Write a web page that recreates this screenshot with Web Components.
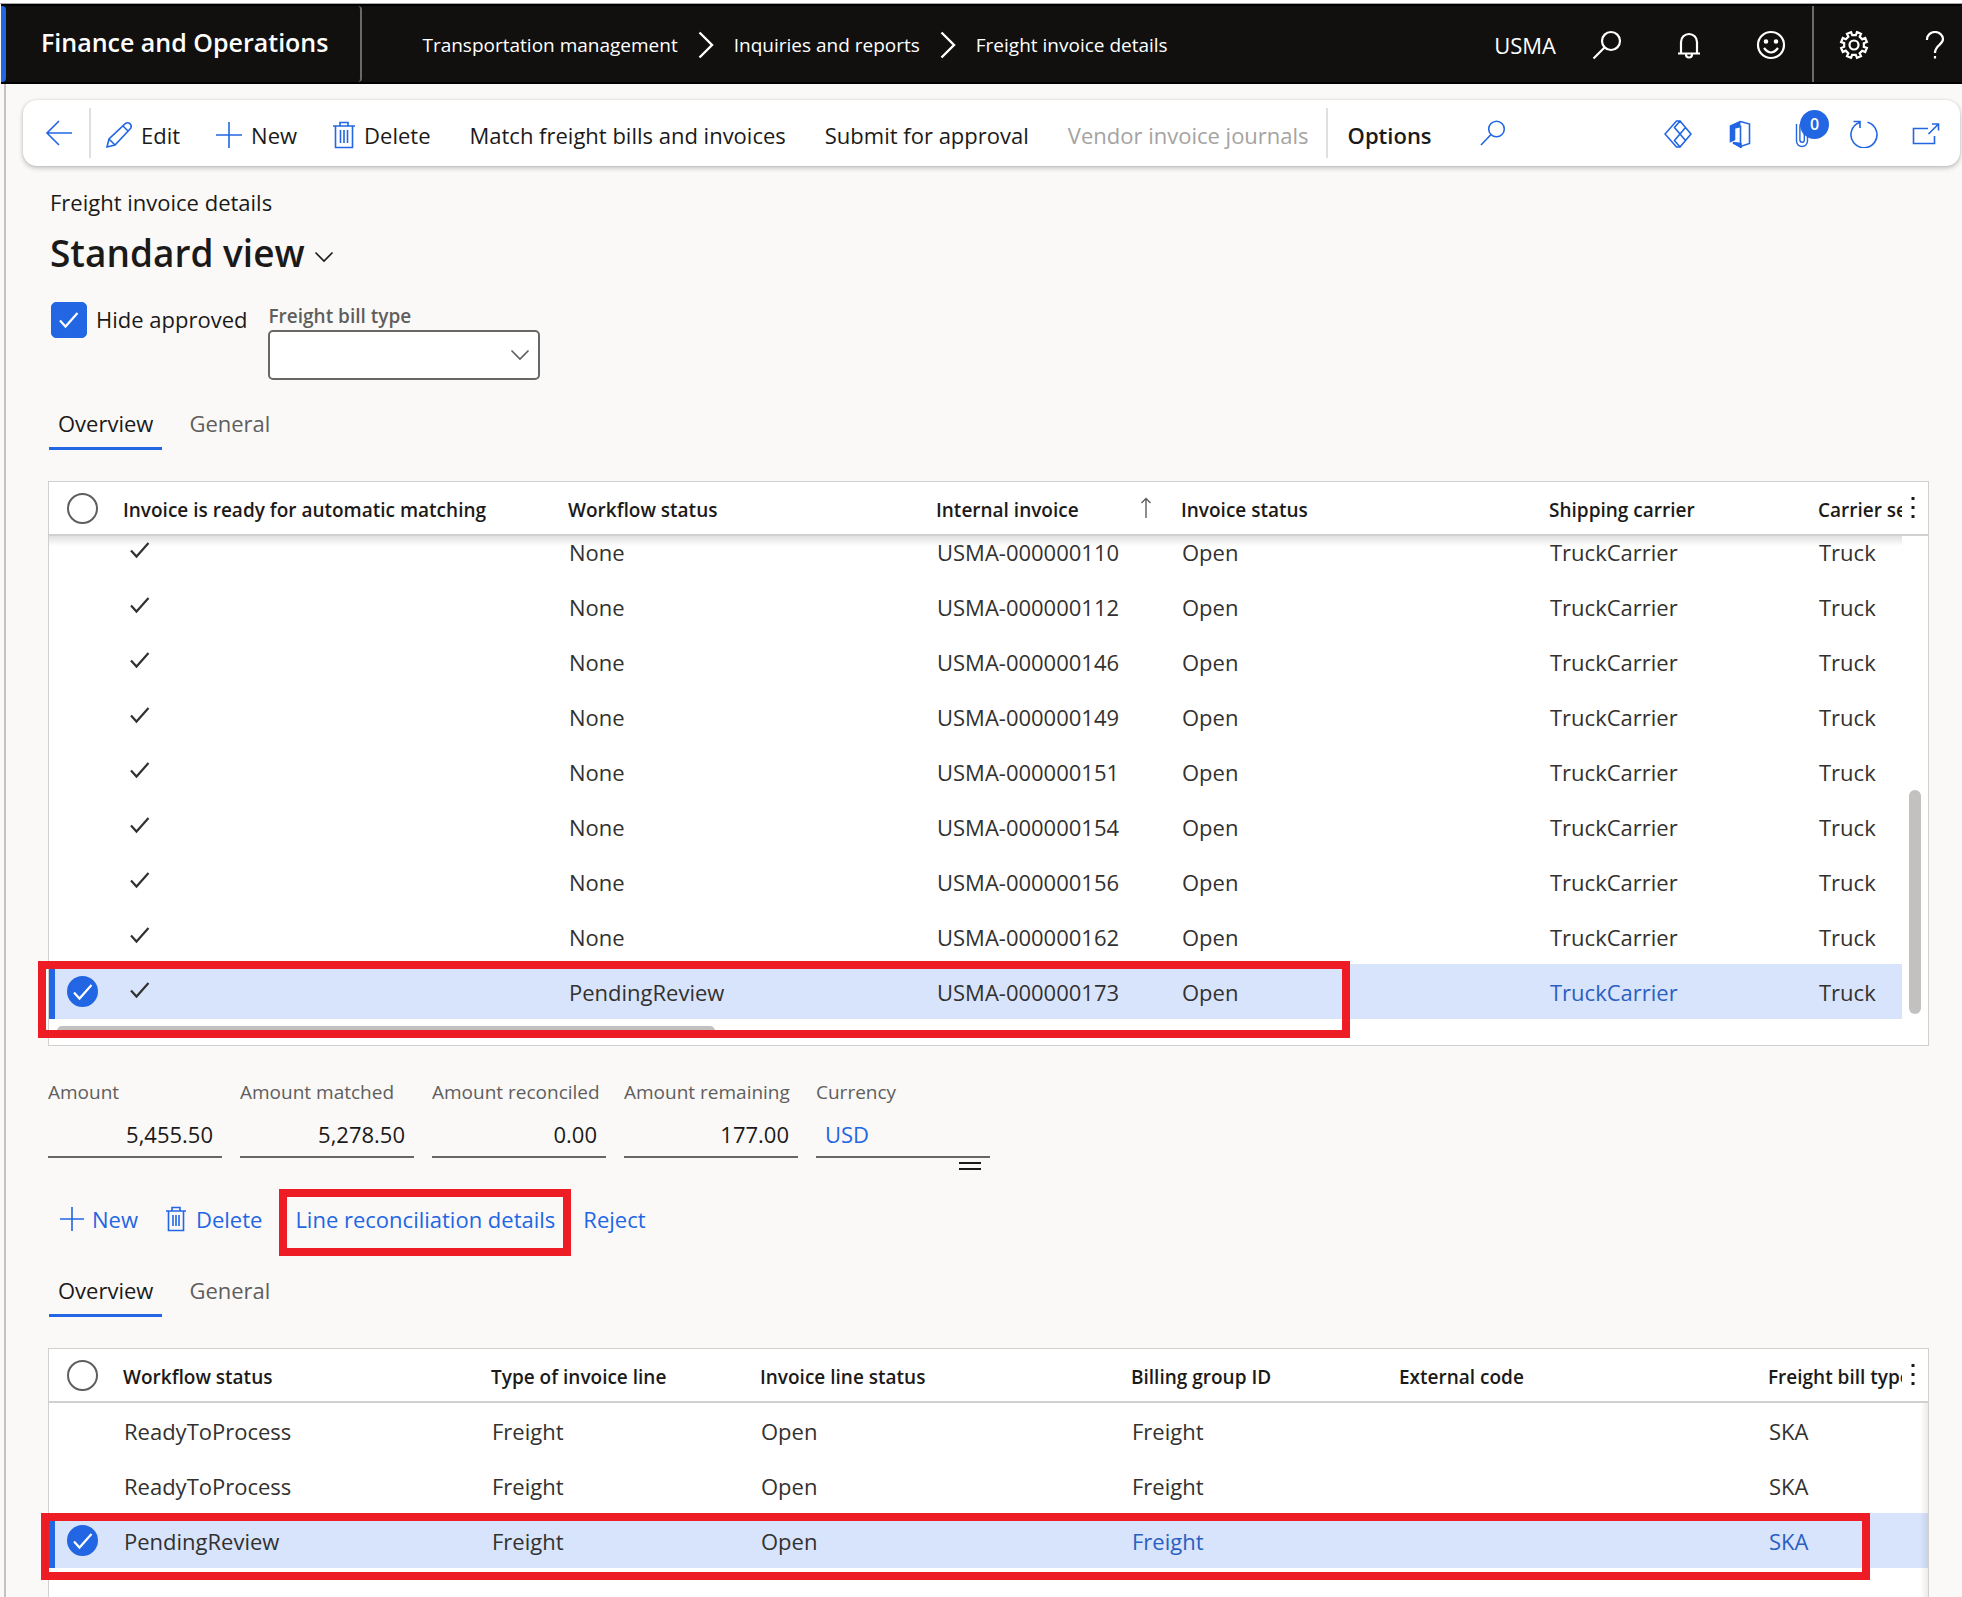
<!DOCTYPE html>
<html lang="en">
<head>
<meta charset="utf-8">
<title>Freight invoice details - Finance and Operations</title>
<style>
  :root {
    --blue: #2266e3;
    --link: #2b5fc0;
    --ink: #1b1a19;
    --ink-soft: #605e5c;
    --rule: #d2d0ce;
    --mark: #ee1c25;
    --size-body: 22px;
    --size-small: 19px;
  }
  body {
    margin: 0;
    background: #faf9f8;
    color: var(--ink);
    font: 400 22px/28px "Open Sans", "Noto Sans", sans-serif;
  }
</style>
</head>
<body>
<fo-app></fo-app>

<script>
function gearPath() {
  const p = [];
  const r = [[13.2, -0.42], [13.2, 0.42], [10, 0.55], [10, 1.02]];
  for (let i = 0; i < 8; i++) {
    for (const [rad, k] of r) {
      const a = (i + k * 0.5) * Math.PI / 4 - Math.PI / 2 + (k > 1 ? 0.18 : 0) + Math.PI / 8;
      p.push((15 + rad * Math.cos(a)).toFixed(2) + ' ' + (15 + rad * Math.sin(a)).toFixed(2));
    }
  }
  return 'M' + p.join('L') + 'Z';
}

const ICONS = {
  back: [28, 26, '<path d="M27 13H2M14 1 2 13l12 12"/>'],
  edit: [28, 28, '<path d="M2 26l2-8L20.500 2.500a3.600 3.600 0 0 1 5 5L10 24ZM4 18l6 6M18 5l5 5"/>'],
  plus: [28, 28, '<path d="M14 1v26M1 14h26"/>'],
  trash: [24, 28, '<path d="M1 5h22M8 5V1.500h8V5M3.500 5v21.500h17V5M8.500 9v13M12 9v13M15.500 9v13"/>'],
  trashSmall: [22, 26, '<path d="M0 5h20M6 5V1.500h8V5M2.500 5v19.500h15V5M7 9v11M10 9v11M13 9v11"/>'],
  plusSmall: [24, 26, '<path d="M12 1v24M0 13h24"/>'],
  search: [30, 30, '<circle cx="19" cy="11" r="9"/><path d="M12.500 17.500 1.500 28.500"/>'],
  find: [26, 26, '<circle cx="16.500" cy="9" r="7.800"/><path d="M11 14.500 1 25"/>'],
  bell: [24, 28, '<path d="M4 22V11a8 8 0 0 1 16 0v11M1 22.500h22M9 23.500a3 3 0 0 0 6 0"/>'],
  smile: [30, 30, '<circle cx="15" cy="15" r="13"/><path d="M8 18q7 9 14 0"/><circle cx="10" cy="11.500" r="1.200" fill="currentColor"/><circle cx="20" cy="11.500" r="1.200" fill="currentColor"/>'],
  gear: [30, 30, '<path d="' + gearPath() + '"/><circle cx="15" cy="15" r="4.500"/>'],
  help: [20, 28, '<path d="M2 9V8a8 7 0 0 1 16 0c0 6-8 6-8 14M10 25v2.500"/>'],
  crumb: [18, 28, '<path d="M2.500 1.500 15 14 2.500 26.500"/>'],
  diamond: [28, 28, '<path d="M16 1h-3.500L1 14l11.500 13H16M16 1l5.500 6.500L16 14l-5.500-6.500ZM16 14l5.500 6.500L16 27l-5.500-6.500ZM21.500 7.500 27 14l-5.500 6.500"/>'],
  office: [22, 28, '<path d="M1 6 11.500 1v5.500L5.500 8v12L1 22Z" fill="currentColor" stroke="none"/><path d="M11.500 1.500 20.500 4v19.500l-9 3L4 23M11.500 1.500 1.500 6v15.500l4-2V8l6-1.500v17L4 23M11.500 7v16"/><path d="M4 22.500 12 24v3.500Z" fill="currentColor"/>'],
  clip: [14, 28, '<path d="M1.500 8V21a5.500 5.500 0 0 0 11 0V6a3.800 3.800 0 0 0-7.600 0V20a2.200 2.200 0 0 0 4.400 0V8M1.500 8V4"/>'],
  refresh: [30, 28, '<path d="M10.500 2.500A13 13 0 1 0 18.500 2.200M4.500 1.500h6.500v6.500"/>'],
  popout: [28, 24, '<path d="M16 6.500H1.500v15h21V14M16.500 12 26 2.500M20 2h6.500v6.500"/>'],
  chevron: [20, 12, '<path d="M1.500 1.500 10 10l8.500-8.500"/>'],
  tick: [22, 20, '<path d="M2 10.500 7.500 16.500 19.500 3" stroke-width="2.200"/>'],
  sort: [12, 22, '<path d="M6 21V1.500M1.500 6 6 1.500 10.500 6"/>'],
  more: [4, 22, '<g fill="currentColor" stroke="none"><rect x=".5" y="0" width="3" height="3"/><rect x=".5" y="9" width="3" height="3"/><rect x=".5" y="18" width="3" height="3"/></g>']
};
function icon(name, stroke = 1.6) {
  const [w, h, body] = ICONS[name];
  return `<svg width="${w}" height="${h}" viewBox="0 0 ${w} ${h}" fill="none" stroke="currentColor" stroke-width="${stroke}" aria-hidden="true">${body}</svg>`;
}
const RESET = `
  *, *::before, *::after { box-sizing: border-box; }
  svg { display: block; flex: none; }
  button { font: inherit; color: inherit; background: none; border: 0; margin: 0; padding: 0; cursor: pointer; }
  a { color: inherit; text-decoration: none; }
`;
class FoElement extends HTMLElement {
  connectedCallback() {
    if (this.shadowRoot) return;
    this.attachShadow({ mode: 'open' }).innerHTML = `<style>${RESET}${this.css()}</style>${this.html()}`;
    this.ready();
  }
  css() { return ''; }
  html() { return '<slot></slot>'; }
  ready() {}
}

class FoHeader extends FoElement {
  css() { return `
    :host { display: flex; align-items: stretch; height: 80px; margin-left: 1px; background: #11100f; color: #fff; border-top: 2px solid #000; border-bottom: 2px solid #000; font-size: var(--size-small); line-height: 28px; }
    .accent { width: 5px; background: var(--blue); border-radius: 0 4px 4px 0; }
    .brand { display: flex; align-items: center; padding: 0 32px 4px 35px; font-size: 25px; font-weight: 600; border-right: 2px solid #6b6a69; border-radius: 0 4px 4px 0; }
    nav { display: flex; align-items: center; gap: 19px; padding: 2px 0 0 60px; margin-right: auto; white-space: nowrap; }
    .company { display: flex; align-items: center; padding: 2px 10px 0 0; font-size: var(--size-body); }
    button { width: 82px; padding-top: 2px; display: flex; align-items: center; justify-content: center; }
    .ruled { border-left: 2px solid #6b6a69; }
    .last { width: 68px; justify-content: flex-start; padding-left: 31px; }
  `; }
  html() { return `
    <span class="accent"></span>
    <a class="brand" href="#home">Finance and Operations</a>
    <nav aria-label="Breadcrumb">
      <a href="#tms">Transportation management</a>${icon('crumb', 2.4)}
      <a href="#inquiries">Inquiries and reports</a>${icon('crumb', 2.4)}
      <a href="#freight">Freight invoice details</a>
    </nav>
    <span class="company">USMA</span>
    <button aria-label="Search">${icon('search', 2.2)}</button>
    <button aria-label="Notifications">${icon('bell', 2.2)}</button>
    <button aria-label="Feedback">${icon('smile', 2.2)}</button>
    <button class="ruled" aria-label="Settings">${icon('gear', 2.2)}</button>
    <button class="last" aria-label="Help">${icon('help', 2.2)}</button>
  `; }
}
customElements.define('fo-header', FoHeader);

class FoCommand extends FoElement {
  css() { return `
    :host { display: block; }
    button { display: flex; align-items: center; gap: 8px; white-space: nowrap; }
    button:disabled { color: #a5a3a1; cursor: default; }
    svg { color: var(--blue); }
  `; }
  html() {
    const name = this.getAttribute('icon');
    return `<button ${this.hasAttribute('disabled') ? 'disabled' : ''}>${name ? icon(name) : ''}<slot></slot></button>`;
  }
}
customElements.define('fo-command', FoCommand);

class FoToolbar extends FoElement {
  css() { return `
    :host { display: flex; align-items: center; height: 66px; margin: 16px 2px 0 17px; padding: 0 3px 0 22px; background: #fff; border-radius: 14px; box-shadow: 0 2px 5px rgba(0,0,0,.24), 0 0 2px rgba(0,0,0,.12); }
    .group { display: flex; align-items: center; gap: 35px; padding: 3px 0 0 14px; }
    .group.wide { gap: 39px; padding: 3px 17px 0 39px; }
    .back, .tool { color: var(--blue); }
    .back { padding-right: 16px; }
    .line { width: 2px; height: 50px; background: #e1dfdd; }
    .tab { font-weight: 600; padding: 3px 0 0 20px; }
    .find { color: var(--blue); margin-left: 48px; }
    .tools { display: flex; margin-left: auto; }
    .tool { position: relative; width: 62px; height: 52px; padding-top: 2px; display: flex; align-items: center; justify-content: center; }
    .badge { position: absolute; left: 29px; top: 3px; width: 29px; height: 29px; border-radius: 15px; background: var(--blue); color: #fff; font-size: 16px; line-height: 28px; font-weight: 600; text-align: center; }
  `; }
  html() { return `
    <button class="back" aria-label="Back">${icon('back')}</button>
    <span class="line"></span>
    <div class="group">
      <fo-command icon="edit">Edit</fo-command>
      <fo-command icon="plus">New</fo-command>
      <fo-command icon="trash">Delete</fo-command>
    </div>
    <div class="group wide">
      <fo-command>Match freight bills and invoices</fo-command>
      <fo-command>Submit for approval</fo-command>
      <fo-command disabled>Vendor invoice journals</fo-command>
    </div>
    <span class="line"></span>
    <button class="tab">Options</button>
    <button class="find" aria-label="Find action">${icon('find')}</button>
    <div class="tools">
      <button class="tool" aria-label="Power Apps">${icon('diamond')}</button>
      <button class="tool" aria-label="Open in Microsoft Office">${icon('office')}</button>
      <button class="tool" aria-label="Attachments">${icon('clip', 1.4)}<span class="badge">0</span></button>
      <button class="tool" aria-label="Refresh">${icon('refresh')}</button>
      <button class="tool" aria-label="Open in new window">${icon('popout')}</button>
    </div>
  `; }
}
customElements.define('fo-toolbar', FoToolbar);

class FoFilters extends FoElement {
  css() { return `
    :host { display: flex; align-items: flex-start; gap: 21px; }
    .check { display: flex; align-items: center; gap: 9px; padding: 0 0 0 3px; white-space: nowrap; }
    .text { padding-bottom: 2px; }
    .box { display: grid; place-items: center; color: #fff; }
    .box > * { grid-area: 1 / 1; }
    .box svg { pointer-events: none; z-index: 1; }
    input { appearance: none; width: 36px; height: 36px; margin: 0; border: 1px solid var(--ink-soft); border-radius: 5px; background: #fff; }
    input:checked { background: var(--blue); border-color: var(--blue); }
    .field label { display: block; font-size: var(--size-small); line-height: 28px; font-weight: 600; color: var(--ink-soft); }
    .select { display: grid; align-items: center; width: 272px; color: var(--ink-soft); }
    .select > * { grid-area: 1 / 1; }
    .select svg { justify-self: end; margin-right: 10px; pointer-events: none; }
    select { appearance: none; width: 100%; height: 50px; border: 2px solid #696765; border-radius: 5px; background: #fff; font: inherit; padding: 0 12px; }
  `; }
  html() { return `
    <label class="check"><span class="box"><input type="checkbox" checked>${icon('tick')}</span><span class="text">Hide approved</span></label>
    <div class="field">
      <label for="bill">Freight bill type</label>
      <div class="select"><select id="bill"><option></option></select>${icon('chevron')}</div>
    </div>
  `; }
}
customElements.define('fo-filters', FoFilters);

class FoTabs extends FoElement {
  css() { return `
    :host { display: flex; gap: 18px; margin-left: 1px; }
    button { padding: 0 9px 10px; border-bottom: 3px solid transparent; color: var(--ink-soft); }
    button[aria-selected="true"] { color: var(--ink); border-color: var(--blue); }
  `; }
  html() { return `<button role="tab" aria-selected="true">Overview</button><button role="tab" aria-selected="false">General</button>`; }
  ready() { this.setAttribute('role', 'tablist'); }
}
customElements.define('fo-tabs', FoTabs);

class FoField extends FoElement {
  css() { return `
    :host { display: block; width: 174px; }
    label { display: block; font-size: var(--size-small); line-height: 24px; color: var(--ink-soft); white-space: nowrap; font-weight: 500; }
    input { display: block; width: 100%; height: 42px; margin-top: 12px; border: 0; border-bottom: 2px solid #696765; background: none; font: inherit; color: var(--ink); text-align: right; padding: 0 9px 5px; border-radius: 0; }
    :host([link]) input { text-align: left; color: var(--blue); }
  `; }
  html() { return `<label for="v">${this.getAttribute('label')}</label><input id="v" readonly value="${this.getAttribute('value')}">`; }
}
customElements.define('fo-field', FoField);

class FoCallout extends FoElement {
  css() { return `
    :host { display: block; position: relative; margin-left: 5px; }
    .frame { position: absolute; inset: -16px -16px -23px; border: 8px solid var(--mark); pointer-events: none; }
  `; }
  html() { return `<slot></slot><span class="frame"></span>`; }
}
customElements.define('fo-callout', FoCallout);

const GRIDS = {
  invoices: {
    caption: 'Freight invoices',
    cols: [['Invoice is ready for automatic matching', 445], ['Workflow status', 368], ['Internal invoice', 245, 'sort'], ['Invoice status', 368], ['Shipping carrier', 269], ['Carrier service']],
    rows: ['110', '112', '146', '149', '151', '154', '156', '162', '173'].map(n =>
      ['\u2713', n === '173' ? 'PendingReview' : 'None', 'USMA-000000' + n, 'Open', 'TruckCarrier', 'Truck']),
    links: [4]
  },
  lines: {
    caption: 'Invoice lines',
    cols: [['Workflow status', 368], ['Type of invoice line', 269], ['Invoice line status', 371], ['Billing group ID', 268], ['External code', 369], ['Freight bill type']],
    rows: [['ReadyToProcess', 'Freight', 'Open', 'Freight', '', 'SKA'], ['ReadyToProcess', 'Freight', 'Open', 'Freight', '', 'SKA'], ['PendingReview', 'Freight', 'Open', 'Freight', '', 'SKA']],
    links: [3, 5]
  }
};

class FoGrid extends FoElement {
  css() { return `
    :host { display: block; position: relative; border: 1px solid var(--rule); background: #fff; }
    .scroll { height: 100%; overflow: hidden; padding-bottom: 26px; }
    table { width: 100%; table-layout: fixed; border-spacing: 0; }
    thead { position: sticky; top: 0; z-index: 1; }
    th { height: 54px; padding: 4px 0 0 12px; background: #fff; border-bottom: 2px solid var(--rule); text-align: left; font-size: var(--size-small); font-weight: 600; white-space: nowrap; overflow: hidden; text-overflow: clip; }
    th:nth-last-child(2) { padding-right: 6px; }
    td { height: 55px; padding: 0 0 0 13px; color: #323130; white-space: nowrap; overflow: hidden; }
    th.pick, td.pick { padding: 0 0 0 18px; }
    .more { padding: 0 0 0 9px; }
    .more button { display: flex; }
    .head { display: flex; align-items: center; gap: 61px; }
    .head svg { color: var(--ink-soft); margin-bottom: 4px; }
    .tick { padding: 0 0 4px 18px; }
    .radio { display: grid; width: 31px; color: #fff; place-items: center; }
    .radio > * { grid-area: 1 / 1; }
    .radio svg { z-index: 1; pointer-events: none; }
    input { appearance: none; width: 31px; height: 31px; margin: 0; border: 2px solid var(--ink-soft); border-radius: 50%; background: #fff; }
    input:checked { border-color: var(--blue); background: var(--blue); }
    tr.on td { background: #d8e4fc; }
    tr.on td.pick { border-left: 6px solid var(--blue); padding-left: 12px; }
    tr.on a { color: var(--link); }
    :host([scrolled]) tr.on td:last-child { background: #fff; }
    .shade { position: absolute; z-index: 1; left: 0; right: 26px; top: 54px; height: 10px; background: linear-gradient(rgba(0,0,0,.12), transparent); pointer-events: none; }
    .bar { position: absolute; background: #c2c1c0; border-radius: 6px; }
    .bar.v { right: 7px; top: 308px; width: 12px; height: 224px; }
    .bar.h { left: 8px; bottom: 9px; width: 658px; height: 10px; }
    .mark { position: absolute; z-index: 2; border: 8px solid var(--mark); pointer-events: none; left: var(--mark-left); top: var(--mark-top); width: var(--mark-width); height: var(--mark-height); }
    :host([flush]) { border-bottom: 0; }
    :host([flush]) .scroll { padding-bottom: 0; }
    :host([flush]) .scroll::after { content: ""; position: absolute; right: 0; top: 54px; bottom: 0; width: 8px; background: linear-gradient(to left, rgba(0,0,0,.08), transparent); }
  `; }
  html() {
    const g = GRIDS[this.getAttribute('data')];
    const scrolled = this.hasAttribute('scrolled');
    const head = g.cols.map(([t, , s]) => `<th scope="col">${s ? `<span class="head"><span>${t}</span>${icon('sort', 1.4)}</span>` : t}</th>`).join('');
    const rows = g.rows.map((r, i) => {
      const on = i === g.rows.length - 1;
      const cells = r.map((c, j) => c === '\u2713' ? `<td class="tick" aria-label="Yes">${icon('tick')}</td>` : `<td>${on && g.links.includes(j) ? `<a href="#open">${c}</a>` : c}</td>`).join('');
      const pick = on ? `<span class="radio"><input type="checkbox" checked aria-label="Select row">${icon('tick', 1.6)}</span>` : '';
      return `<tr${on ? ' class="on"' : ''}><td class="pick">${pick}</td>${cells}<td></td></tr>`;
    }).join('');
    return `
      <div class="scroll">
        <table aria-label="${g.caption}">
          <colgroup><col style="width:62px">${g.cols.map(([, w]) => `<col${w ? ` style="width:${w}px"` : ''}>`).join('')}<col style="width:26px"></colgroup>
          <thead><tr><th class="pick"><span class="radio"><input type="checkbox" aria-label="Select all"></span></th>${head}<th class="more"><button aria-label="Grid options">${icon('more')}</button></th></tr></thead>
          <tbody>${rows}</tbody>
        </table>
      </div>
      ${scrolled ? '<span class="shade"></span><span class="bar v"></span><span class="bar h"></span>' : ''}
      <span class="mark"></span>`;
  }
  ready() {
    if (this.hasAttribute('scrolled')) {
      const s = this.shadowRoot.querySelector('.scroll');
      s.scrollTop = s.scrollHeight;
    }
  }
}
customElements.define('fo-grid', FoGrid);

class FoApp extends FoElement {
  css() { return `
    :host { display: flex; flex-direction: column; height: 100vh; overflow: hidden; }
    .strip { height: 4px; flex: none; background: #fff; border-bottom: 1px solid #a9a8a7; }
    fo-header, fo-toolbar { flex: none; }
    .shell { flex: 1; min-height: 0; display: flex; flex-direction: column; margin-left: 4px; border-left: 2px solid #c3c2c1; }
    main { flex: 1; min-height: 0; display: flex; flex-direction: column; padding: 22px 33px 0 42px; }
    .caption { padding-left: 2px; }
    h1 { display: flex; align-items: center; gap: 9px; margin: 13px 0 0; padding-left: 2px; font-size: 37px; line-height: 48px; font-weight: 600; }
    h1 button { padding-top: 8px; display: flex; }
    fo-filters { margin-top: 25px; }
    fo-tabs { margin-top: 29px; }
    fo-grid { margin-top: 31px; }
    .invoices { flex: none; height: 565px; --mark-left: -11px; --mark-top: 479px; --mark-width: 1312px; --mark-height: 77px; }
    .lines { flex: 1; min-height: 0; --mark-left: -8px; --mark-top: 164px; --mark-width: 1829px; --mark-height: 67px; }
    .totals { position: relative; display: flex; gap: 18px; margin-top: 34px; width: max-content; }
    .grip { position: absolute; right: 9px; bottom: -12px; width: 22px; height: 8px; border: solid var(--ink); border-width: 2px 0; }
    .actions { display: flex; gap: 28px; margin-top: 47px; padding-left: 12px; color: var(--blue); }
    .second { margin-top: 43px; }
  `; }
  html() { return `
    <div class="strip"></div>
    <fo-header></fo-header>
    <div class="shell">
      <fo-toolbar></fo-toolbar>
      <main>
        <div class="caption">Freight invoice details</div>
        <h1>Standard view <button aria-label="Change view">${icon('chevron')}</button></h1>
        <fo-filters></fo-filters>
        <fo-tabs></fo-tabs>
        <fo-grid class="invoices" data="invoices" scrolled></fo-grid>
        <div class="totals">
          <fo-field label="Amount" value="5,455.50"></fo-field>
          <fo-field label="Amount matched" value="5,278.50"></fo-field>
          <fo-field label="Amount reconciled" value="0.00"></fo-field>
          <fo-field label="Amount remaining" value="177.00"></fo-field>
          <fo-field label="Currency" value="USD" link></fo-field>
          <span class="grip"></span>
        </div>
        <div class="actions">
          <fo-command icon="plusSmall">New</fo-command>
          <fo-command icon="trashSmall">Delete</fo-command>
          <fo-callout><fo-command>Line reconciliation details</fo-command></fo-callout>
          <fo-command>Reject</fo-command>
        </div>
        <fo-tabs class="second"></fo-tabs>
        <fo-grid class="lines" data="lines" flush></fo-grid>
      </main>
    </div>
  `; }
}
customElements.define('fo-app', FoApp);
</script>
</body>
</html>
